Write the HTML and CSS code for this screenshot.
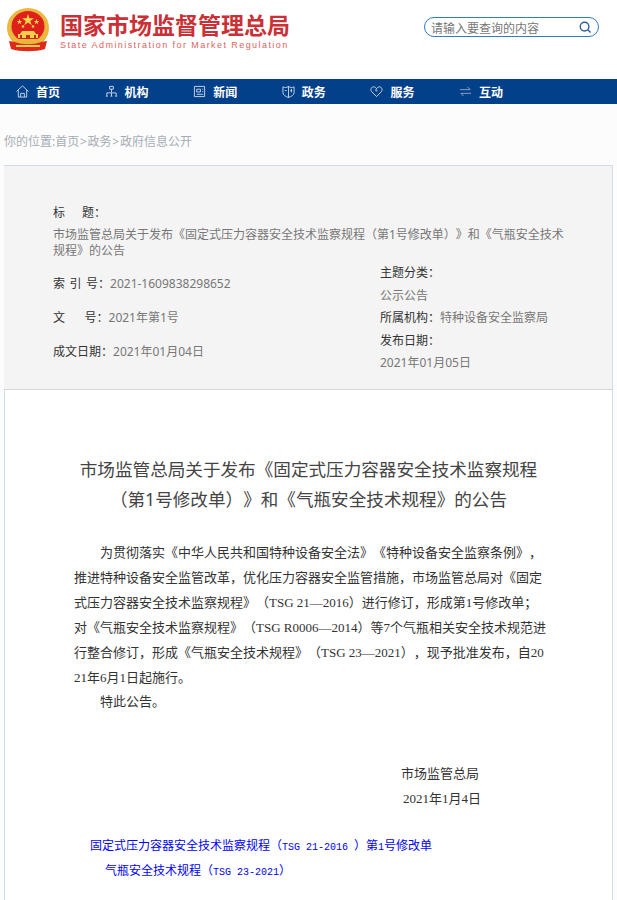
FILE: index.html
```html
<!DOCTYPE html>
<html lang="zh-CN">
<head>
  <meta charset="UTF-8" />
  <meta name="viewport" content="width=device-width, initial-scale=1.0"/>
  <title>国家市场监督管理总局</title>
  <link rel="stylesheet" href="styles.css">
</head>
<body>
  <header class="top">
    <a class="logo" href="#">
      <svg class="emblem" viewBox="0 0 44 44" width="44" height="44">
        <ellipse cx="21" cy="20" rx="21" ry="20" fill="#e9b83c"/>
        <ellipse cx="21" cy="18.500" rx="16.500" ry="15.500" fill="#de1f1c"/>
        <path d="M21 6l1.400 4.300h4.500l-3.600 2.700 1.400 4.300-3.700-2.700-3.700 2.700 1.400-4.300-3.600-2.700h4.500z" fill="#f6d84a"/>
        <path d="M12.500 11l.7 2h2.100l-1.700 1.300.6 2-1.700-1.200-1.700 1.200.6-2-1.700-1.300h2.100zM29.500 11l.7 2h2.100l-1.700 1.300.6 2-1.700-1.200-1.700 1.200.6-2-1.700-1.300h2.100z" fill="#f6d84a"/>
        <circle cx="16" cy="18.500" r="1.300" fill="#f6d84a"/>
        <circle cx="26" cy="18.500" r="1.300" fill="#f6d84a"/>
        <path d="M15 23h12l2 3H13z" fill="#f3cf4e"/>
        <path d="M11 26h20v4H11z" fill="#f3cf4e"/>
        <path d="M19 27h4v3h-4zM13 27h2v3h-2zM27 27h2v3h-2z" fill="#c9301f"/>
        <path d="M8 31h26l3 3-3 3H8l-3-3z" fill="#e8b83c"/>
        <path d="M2 33l6 1c8 3 18 3 26 0l6-1-2 8c-9 3-25 3-34 0z" fill="#e0281d"/>
        <path d="M9 37h24v2H9z" fill="#f3cf4e"/>
      </svg>
      <span class="logo-text">
        <strong>国家市场监督管理总局</strong>
        <em>State Administration for Market Regulation</em>
      </span>
    </a>
    <form class="search">
      <input type="text" placeholder="请输入要查询的内容" />
      <svg viewBox="0 0 14 14" width="13" height="13">
        <circle cx="6" cy="6" r="4.700" fill="none" stroke="#2f5f9c" stroke-width="1.500"/>
        <path d="M9.500 9.500l3 3" stroke="#2f5f9c" stroke-width="1.500"/>
      </svg>
    </form>
  </header>

  <nav class="nav">
    <a href="#">
      <svg viewBox="0 0 14 14" width="13" height="13"><path d="M.5 7L7 1l6.500 6M2.500 5.500V13h9V5.500M5 13V9h4v4" fill="none" stroke="#cfd9e8"/></svg>
      首页</a>
    <a href="#">
      <svg viewBox="0 0 14 14" width="13" height="13"><path d="M5 1.500h4v3H5zM7 4.500V8M2 12V8.500h10V12M7 8.500V12M1 12h2M6 12h2M11 12h2" fill="none" stroke="#cfd9e8"/></svg>
      机构</a>
    <a href="#">
      <svg viewBox="0 0 14 14" width="13" height="13"><path d="M1.500 1.500h11v11h-11zM4 4.500h4v3H4zM10 4.500h1M10 7h1M4 10h7" fill="none" stroke="#cfd9e8"/></svg>
      新闻</a>
    <a href="#">
      <svg viewBox="0 0 14 14" width="13" height="13"><path d="M1 2c2 1 4 1 6-.500 2 1.500 4 1.500 6 .500v6.500c0 2-3 4-6 5-3-1-6-3-6-5zM7 1.500v12M3 6h2M9 6h2M10 4v4" fill="none" stroke="#cfd9e8"/></svg>
      政务</a>
    <a href="#">
      <svg viewBox="0 0 14 14" width="13" height="13"><path d="M7 12.500L1.800 7.200C.2 5.500 1 2 3.800 2 5.300 2 6.300 2.800 7 4l-1 2 2 .500" fill="none" stroke="#cfd9e8"/><path d="M7 12.500l5.200-5.300C13.800 5.500 13 2 10.200 2 8.700 2 7.700 2.800 7 4" fill="none" stroke="#cfd9e8"/></svg>
      服务</a>
    <a href="#">
      <svg viewBox="0 0 14 14" width="13" height="13"><path d="M1 5h11L9 2M13 9H2l3 3" fill="none" stroke="#8fa6c6"/></svg>
      互动</a>
  </nav>

  <main class="page">
    <p class="crumbs">你的位置:首页<span class="sep">&gt;</span>政务<span class="sep">&gt;</span>政府信息公开</p>

    <section class="meta">
      <div class="meta-title">
        <div class="lbl">标<span class="gap"></span>题：</div>
        <div class="val">市场监管总局关于发布《固定式压力容器安全技术监察规程（第1号修改单）》和《气瓶安全技术规程》的公告</div>
      </div>
      <div class="meta-cols">
        <div class="col-left">
          <div><span class="lbl">索 引 号：</span><span class="val">2021-1609838298652</span></div>
          <div><span class="lbl">文<span class="gap gap-wide"></span>号：</span><span class="val">2021年第1号</span></div>
          <div><span class="lbl">成文日期：</span><span class="val">2021年01月04日</span></div>
        </div>
        <div class="col-right">
          <div class="lbl">主题分类：</div>
          <div class="val">公示公告</div>
          <div><span class="lbl">所属机构：</span><span class="val">特种设备安全监察局</span></div>
          <div class="lbl">发布日期：</div>
          <div class="val">2021年01月05日</div>
        </div>
      </div>
    </section>

    <article class="doc">
      <h1>市场监管总局关于发布《固定式压力容器安全技术监察规程<br>（第1号修改单）》和《气瓶安全技术规程》的公告</h1>
      <div class="doc-body">
        <p>为贯彻落实《中华人民共和国特种设备安全法》《特种设备安全监察条例》，推进特种设备安全监管改革，优化压力容器安全监管措施，市场监管总局对《固定式压力容器安全技术监察规程》（TSG 21—2016）进行修订，形成第1号修改单；对《气瓶安全技术监察规程》（TSG R0006—2014）等7个气瓶相关安全技术规范进行整合修订，形成《气瓶安全技术规程》（TSG 23—2021），现予批准发布，自2021年6月1日起施行。</p>
        <p>特此公告。</p>
      </div>
      <div class="sign">
        <p class="sign-org">市场监管总局</p>
        <p class="sign-date">2021年1月4日</p>
      </div>
      <ul class="files">
        <li><a href="#">固定式压力容器安全技术监察规程（<span class="lat">TSG 21-2016 </span>）第<span class="lat">1</span>号修改单</a></li>
        <li class="second"><a href="#">气瓶安全技术规程（<span class="lat">TSG 23-2021</span>）</a></li>
      </ul>
    </article>
  </main>
</body>
</html>
```

FILE: styles.css
```css
html, body { margin: 0; padding: 0; background: #fff; overflow: hidden; height: 900px; }
body { font-family: "Noto Sans", "Noto Sans CJK SC", sans-serif; font-size: 12px; color: #333; text-spacing-trim: space-all; }
a { text-decoration: none; color: inherit; }
p { margin: 0; }

.top { height: 79px; display: flex; justify-content: space-between; align-items: flex-start; }
.logo { display: flex; margin: 8px 0 0 7px; }
.emblem { display: block; }
.logo-text { margin: 5px 0 0 9px; display: flex; flex-direction: column; }
.logo-text strong { font-size: 23px; line-height: 24px; color: #cb3036; font-weight: 700; white-space: nowrap; }
.logo-text em { font-family: "Liberation Sans", sans-serif; font-style: normal; font-size: 9px; line-height: 11px; margin-top: 3px; letter-spacing: 1.430px; color: #de625f; white-space: nowrap; }

.search { width: 173px; height: 18px; margin: 17px 18px 0 0; border: 1px solid #2c7cc6; border-radius: 10px; display: flex; align-items: center; }
.search input { flex: 1; min-width: 0; border: 0; outline: 0; background: none; padding: 0 0 0 6px; font: 12px "Noto Sans CJK SC", sans-serif; }
.search input::placeholder { color: #777; opacity: 1; }
.search svg { margin-right: 6px; }

.nav { background: #03408a; height: 25px; display: flex; padding-left: 16px; }
.nav a { width: 88.600px; display: flex; align-items: center; gap: 7px; color: #fff; font-size: 12px; font-weight: 700; }

.page { background: #fcfcfc; height: 796px; padding-left: 4px; }
.crumbs { height: 61px; line-height: 76px; color: #a6acb5; white-space: nowrap; }
.sep { margin: 0 .75px; }

.meta { width: 609px; box-sizing: border-box; height: 225px; background: #f4f4f4; border-top: 1px solid #cfdcec; border-right: 1px solid #cfdcec; border-bottom: 1px solid #d3d7dc; padding: 38px 40px 0 49px; }
.lbl { color: #333; font-family: "Noto Sans", "Noto Sans CJK TC", sans-serif; word-spacing: 1.400px; }
.val { color: #777; }
.gap { display: inline-block; width: 17px; }
.gap-wide { width: 19.500px; }
.meta-title .lbl { line-height: 17px; }
.meta-title .val { margin-top: 6px; line-height: 16px; }
.meta-cols { display: flex; margin-top: 3px; }
.col-left { width: 327px; padding-top: 5px; }
.col-left > div { height: 34px; line-height: 34px; }
.col-right > div { line-height: 22.500px; }

.doc { width: 609px; box-sizing: border-box; height: 511px; background: #fff; border-left: 1px solid #cfdcec; border-right: 1px solid #cfdcec; }
.doc h1 { margin: 0; padding-top: 64px; font-size: 17.600px; line-height: 30px; font-weight: 400; color: #444; text-align: center; }
.doc-body { margin: 27px 65px 0 69px; font-family: "Liberation Serif", "Noto Sans CJK SC", serif; font-size: 13px; line-height: 24.900px; word-break: break-all; color: #333; }
.doc-body p { text-indent: 26px; }
.sign { margin-top: 46px; font-family: "Liberation Serif", "Noto Sans CJK SC", serif; font-size: 13px; }
.sign p { line-height: 25px; }
.sign-org { padding-left: 396px; }
.sign-date { padding-left: 398px; }
.files { list-style: none; margin: 22px 0 0; padding: 0 0 0 85px; white-space: nowrap; }
.files li { height: 25px; line-height: 25px; }
.files a { color: #00f; font-size: 12px; }
.files .lat { font-family: "Liberation Mono", monospace; font-size: 10px; }
.files .second { padding-left: 15px; }
```
